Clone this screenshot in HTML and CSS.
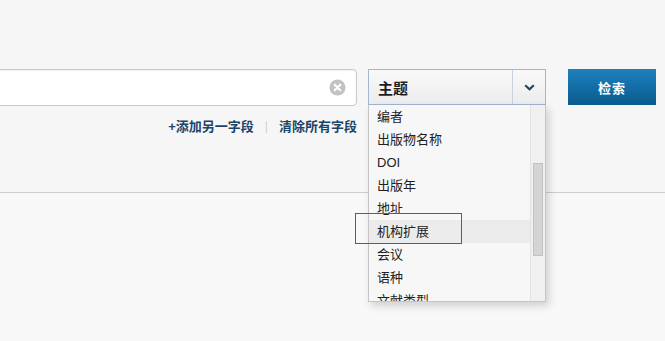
FILE: index.html
```html
<!DOCTYPE html>
<html lang="zh-CN">
<head>
    <meta charset="UTF-8">
    <meta name="viewport" content="width=device-width,initial-scale=1.0">
    <title>检索</title>
    <link rel="stylesheet" href="styles.css">
</head>
<body>
    <div class="search-area">
        <div class="search-row">
            <div class="query">
                <input class="query-input" type="text" autocomplete="off">
                <span class="clear-btn">
                    <svg width="17" height="17" viewBox="0 0 17 17"><circle cx="8.5" cy="8.5" r="8" fill="#c2c2c2"/><path d="M5.7 5.7 L11.3 11.3 M11.3 5.7 L5.7 11.3" stroke="#fff" stroke-width="2.2" stroke-linecap="round"/></svg>
                </span>
            </div>

            <div class="field-select">
                <div class="select-box">
                    <span class="select-value">主题</span>
                    <span class="select-arrow">
                        <svg width="11" height="7" viewBox="0 0 11 7"><path d="M1.2 1.2 L5.5 5.3 L9.8 1.2" fill="none" stroke="#1b3f6b" stroke-width="2"/></svg>
                    </span>
                </div>

                <!-- open dropdown -->
                <div class="dropdown">
                    <ul class="options">
                        <li>编者</li>
                        <li>出版物名称</li>
                        <li>DOI</li>
                        <li>出版年</li>
                        <li>地址</li>
                        <li class="hover">机构扩展</li>
                        <li>会议</li>
                        <li>语种</li>
                        <li>文献类型</li>
                    </ul>
                    <div class="scrollbar"><div class="thumb"></div></div>
                </div>
                <div class="mark"></div>
            </div>

            <button class="search-btn">检索</button>
        </div>

        <div class="links">
            <a class="link" href="#">+添加另一字段</a>
            <span class="sep">|</span>
            <a class="link" href="#">清除所有字段</a>
        </div>
    </div>

    <div class="divider"></div>
</body>
</html>
```

FILE: styles.css
```css
html { box-sizing: border-box; }
*, *::before, *::after { box-sizing: inherit; }
body { margin: 0; height: 341px; overflow: hidden; background: #f6f6f6; font-family: "Liberation Sans", "Noto Sans CJK SC", sans-serif; color: #222; }

.search-area { padding-top: 69px; height: 192px; }
.search-row { display: flex; align-items: flex-start; margin-left: -12px; }

.query { position: relative; width: 369px; height: 37px; display: flex; align-items: center; background: #fff; border: 1px solid #c9c9c9; border-radius: 4px; box-shadow: inset 0 1px 2px rgba(0,0,0,0.06); }
.query-input { flex: 1; border: none; background: transparent; height: 100%; outline: none; font-family: inherit; font-size: 14px; padding: 0 10px; }
.clear-btn { display: flex; margin-right: 10px; }

.field-select { position: relative; width: 178px; margin-left: 11px; }
.select-box { display: flex; height: 36px; border: 1px solid #9fb6d4; background: linear-gradient(#f9f9f9, #ececec); }
.select-value { flex: 1; display: flex; align-items: center; padding-left: 9px; font-size: 15px; font-weight: bold; color: #1e1e1e; }
.select-arrow { width: 33px; display: flex; align-items: center; justify-content: center; border-left: 1px solid #c6d2e0; padding-top: 1px; }

.dropdown { position: absolute; top: 36px; left: 0; width: 178px; height: 197px; display: flex; background: #f7f7f7; border: 1px solid #c5c5c5; border-top: none; box-shadow: 3px 4px 8px rgba(0,0,0,0.16); overflow: hidden; z-index: 2; }
.options { list-style: none; margin: 0; padding: 0; flex: 1; }
.options li { height: 23px; line-height: 23px; padding-left: 8px; font-size: 13px; color: #222; white-space: nowrap; }
.options li.hover { background: #ebebeb; }
.scrollbar { width: 15px; background: #f0f0f0; border-left: 1px solid #e2e2e2; padding: 58px 2px 0 2px; }
.thumb { height: 93px; background: #d4d4d4; border: 1px solid #c2c2c2; }

.mark { position: absolute; top: 144px; left: -13px; width: 107px; height: 31px; border: 1px solid #ec1f2d; z-index: 3; }

.search-btn { width: 88px; height: 36px; margin-left: 22px; border: none; background: linear-gradient(#1d80bd, #0a5b8e); color: #fff; font-family: inherit; font-size: 13px; font-weight: bold; letter-spacing: 1px; }

.links { width: 357px; display: flex; justify-content: flex-end; align-items: center; gap: 11px; margin-top: 10px; }
.link { color: #1d4468; font-size: 13px; font-weight: bold; text-decoration: none; }
.sep { color: #cfcfcf; font-size: 12px; }

.divider { border-top: 1px solid #cdcdcd; background: #f8f8f8; height: 149px; }
```
